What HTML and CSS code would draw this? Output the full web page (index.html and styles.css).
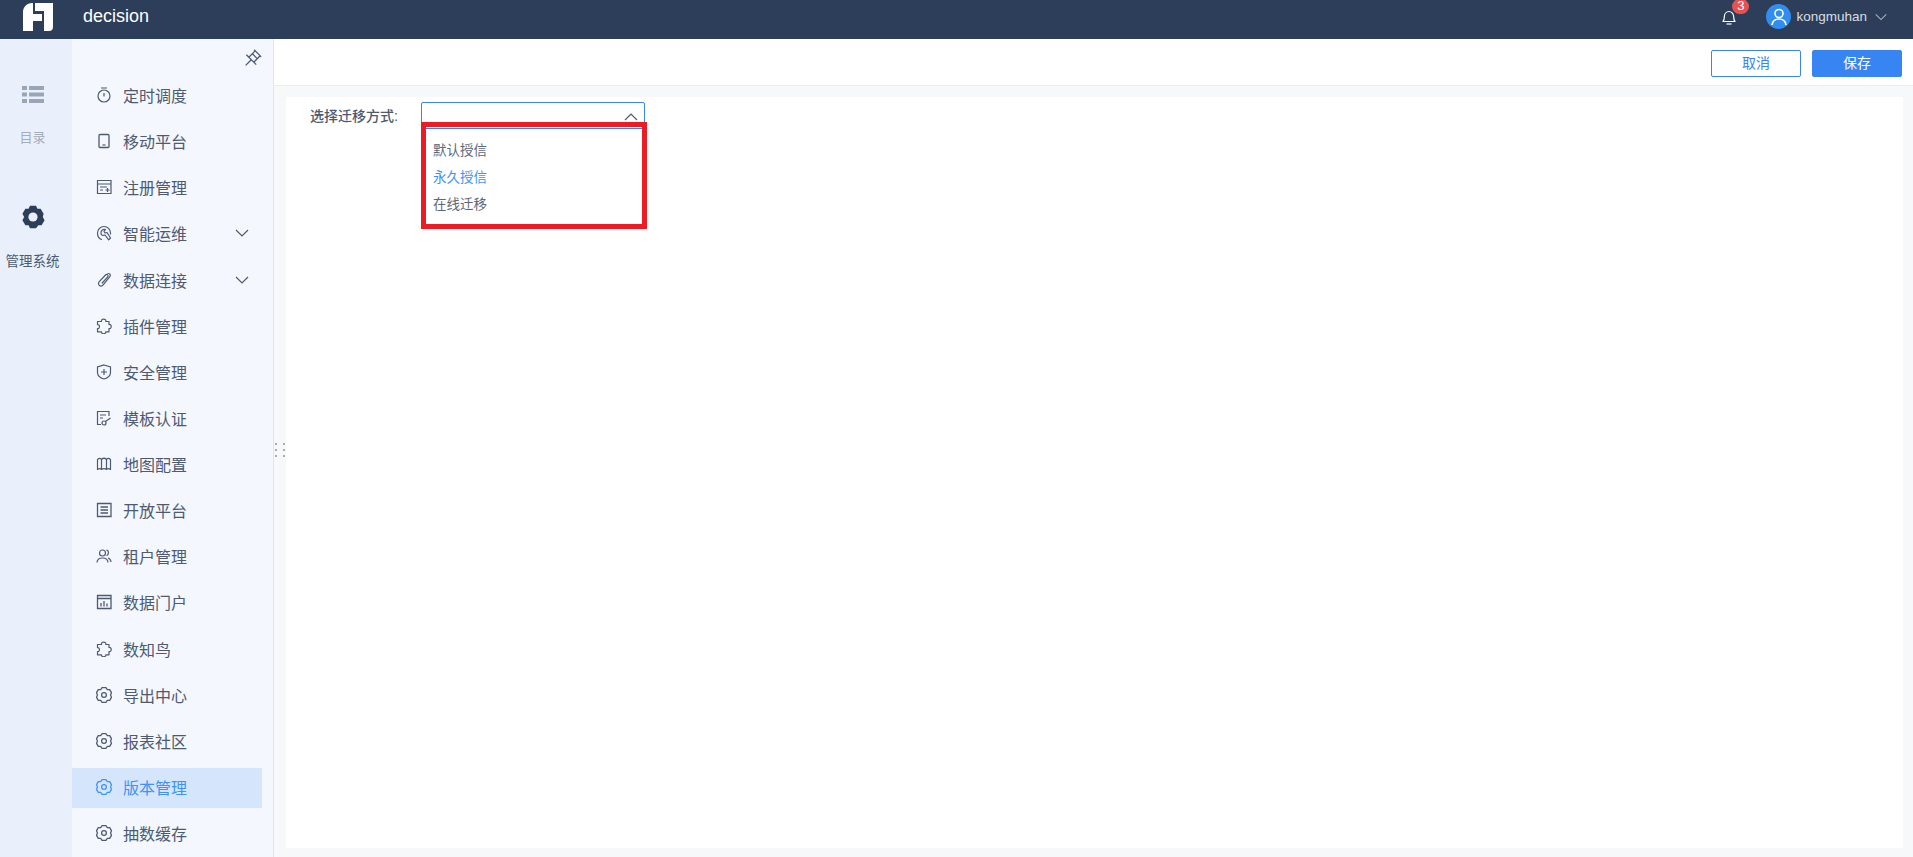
FILE: index.html
```html
<!DOCTYPE html>
<html lang="zh-CN">
<head>
    <meta charset="UTF-8">
    <title>decision</title>
    <link rel="stylesheet" href="styles.css">
</head>
<body>

<svg class="sprite" width="0" height="0">
    <symbol id="i-gear" viewBox="1 1 14 14">
        <path d="M6.300 1.600h3.400l1.200 1.600 2.100.1 1.600 2.800-.9 1.900.9 1.900-1.600 2.800-2.100.1-1.200 1.600H6.300l-1.200-1.600-2.100-.1-1.600-2.800.9-1.900-.9-1.900 1.600-2.800 2.100-.1z" fill="none" stroke="currentColor" stroke-width="1.100" stroke-linejoin="round"/>
        <circle cx="8" cy="8" r="2.100" fill="none" stroke="currentColor" stroke-width="1.100"/>
    </symbol>
    <symbol id="i-puzzle" viewBox="0 0 16 16">
        <path d="M5.500 3.500c-.6-3.300 5-3.300 4.300 0H13v3c3-.6 3 4.700 0 4v3.300H9.800c.5 2.600-4.800 2.600-4.300 0H1.500v-3.300c2.600.6 2.600-4.500 0-3.800V3.500z" fill="none" stroke="currentColor" stroke-width="1.200" stroke-linejoin="round"/>
    </symbol>
    <symbol id="i-chevron" viewBox="0 0 16 16">
        <path d="M2 5l6 6 6-6" fill="none" stroke="currentColor" stroke-width="1.200"/>
    </symbol>
</svg>

<header class="topbar">
    <svg class="logo" viewBox="0 0 30 28">
        <path d="M0 9C0 4 4 0 9 0h1v11h9v7h-9v10H0zM12 0h18v24a4 4 0 0 1-4 4h-5V8h-9z" fill="#fff"/>
    </svg>
    <span class="app-name">decision</span>
    <div class="topbar-right">
        <div class="bell">
            <svg viewBox="0 0 16 18" width="16" height="18">
                <path d="M2 13.500c1-1 1.300-2 1.300-4.500 0-3.200 2-5.500 4.700-5.500s4.700 2.300 4.700 5.500c0 2.500.3 3.500 1.300 4.500z" fill="none" stroke="#fff" stroke-width="1.200" stroke-linejoin="round"/>
                <path d="M5.500 16h5" stroke="#fff" stroke-width="1.200"/>
            </svg>
            <span class="badge">3</span>
        </div>
        <div class="avatar">
            <svg viewBox="0 0 24 24" width="24" height="24">
                <circle cx="12" cy="8.500" r="4" fill="none" stroke="#fff" stroke-width="1.600"/>
                <path d="M5 20c.5-4 3.300-6 7-6s6.500 2 7 6" fill="none" stroke="#fff" stroke-width="1.600"/>
            </svg>
        </div>
        <span class="user-name">kongmuhan</span>
        <svg class="user-arrow"><use href="#i-chevron"/></svg>
    </div>
</header>

<div class="main">
    <nav class="rail">
        <div class="rail-item rail-muted">
            <svg viewBox="0 0 22 18" width="22" height="18">
                <path d="M0 1h5v4H0zM7 1h15v4H7zM0 7.500h5v4H0zM7 7.500h15v4H7zM0 14h5v4H0zM7 14h15v4H7z" fill="#9aa5b8"/>
            </svg>
            <span>目录</span>
        </div>
        <div class="rail-item rail-active">
            <svg viewBox="0 0 24 24" width="24" height="24">
                <path d="M9 .8h6l1.400 3 3.200-.1 3 5.100L21.800 12l1.800 3.200-3 5.100-3.200-.1L15 23.200H9l-1.400-3-3.200.1-3-5.100L3.200 12 1.400 8.800l3-5.100 3.200.1z" fill="#2c3e5a"/>
                <circle cx="12" cy="12" r="4.600" fill="#e9f0fc"/>
            </svg>
            <span>管理系统</span>
        </div>
    </nav>

    <aside class="menu">
        <div class="pin-row">
            <svg viewBox="0 0 20 20" width="20" height="20">
                <g transform="rotate(45 10 10)" fill="none" stroke="#4d5a70" stroke-width="1.300">
                    <path d="M5 2h10M6.500 2v9M13.500 2v9M3 11h14M10 11v8M6.500 6h7"/>
                </g>
            </svg>
        </div>
        <ul class="menu-list">
            <li class="menu-item">
                <svg class="menu-icon" viewBox="0 0 16 16"><circle cx="8" cy="9" r="6" fill="none" stroke="currentColor" stroke-width="1.200"/><path d="M8 6v3.500M5 1h6" fill="none" stroke="currentColor" stroke-width="1.200"/></svg>
                <span>定时调度</span>
            </li>
            <li class="menu-item">
                <svg class="menu-icon" viewBox="0 0 16 16"><rect x="3" y="1.500" width="10" height="13" rx="1" fill="none" stroke="currentColor" stroke-width="1.300"/><path d="M6.500 12h3" stroke="currentColor" stroke-width="1.200"/></svg>
                <span>移动平台</span>
            </li>
            <li class="menu-item">
                <svg class="menu-icon" viewBox="0 0 16 16"><path d="M15 14.500H1.500v-13H15zM1.500 5H15M4 8h7M4 11h3M9.500 11h4M11.500 9v4" fill="none" stroke="currentColor" stroke-width="1.200"/></svg>
                <span>注册管理</span>
            </li>
            <li class="menu-item">
                <svg class="menu-icon" viewBox="0 0 16 16"><path d="M6 14.800C3 13.800 1.500 11 1.500 8a6.500 6.500 0 0 1 13 0v1.500M5 8.500a3.500 3.500 0 0 1 4.500-4L8 6.500l1 1.500 2-.5 3.500 5.500-1.800 1.800L9 10c-2 .8-4 .5-4-1.500z" fill="none" stroke="currentColor" stroke-width="1.200" stroke-linejoin="round"/></svg>
                <span>智能运维</span>
                <svg class="menu-arrow"><use href="#i-chevron"/></svg>
            </li>
            <li class="menu-item">
                <svg class="menu-icon" viewBox="0 0 16 16"><path d="M12 1.500c1.800-.2 3 1.500 2 3L7 13c-1.500 2-5 .8-4.500-1.800.1-.6.400-1.100.8-1.600L9.500 3c1.500-1.500 3.500.5 2 2.200L6.200 11" fill="none" stroke="currentColor" stroke-width="1.200" stroke-linecap="round"/></svg>
                <span>数据连接</span>
                <svg class="menu-arrow"><use href="#i-chevron"/></svg>
            </li>
            <li class="menu-item">
                <svg class="menu-icon"><use href="#i-puzzle"/></svg>
                <span>插件管理</span>
            </li>
            <li class="menu-item">
                <svg class="menu-icon" viewBox="0 0 16 16"><path d="M8 1l6.500 2v5.500c0 3-3 5.500-6.500 6.500C4.500 14 1.500 11.500 1.500 8.500V3zM8 5v6M5 8h6" fill="none" stroke="currentColor" stroke-width="1.200"/></svg>
                <span>安全管理</span>
            </li>
            <li class="menu-item">
                <svg class="menu-icon" viewBox="0 0 16 16"><path d="M5 14.500H1.500v-13H13V6M4 5h6M4 8h3" fill="none" stroke="currentColor" stroke-width="1.200"/><circle cx="8" cy="13" r="2" fill="none" stroke="currentColor" stroke-width="1.200"/><path d="M9.500 11.500L14.500 8" stroke="currentColor" stroke-width="1.200"/></svg>
                <span>模板认证</span>
            </li>
            <li class="menu-item">
                <svg class="menu-icon" viewBox="0 0 16 16"><path d="M1.500 3.500c1.500-1.500 3-1.500 4 0 1.500-1.500 3.500-1.500 5 0 1-1.500 2.500-1.500 4 0v10c-1.500-1-3-1-4 0-1.500-1-3.500-1-5 0-1-1-2.500-1-4 0zM5.500 3.500v10M10.500 3.500v10" fill="none" stroke="currentColor" stroke-width="1.200" stroke-linejoin="round"/></svg>
                <span>地图配置</span>
            </li>
            <li class="menu-item">
                <svg class="menu-icon" viewBox="0 0 16 16"><path d="M1.500 1.500H15v13H1.500zM4.500 5h7.500M4.500 8h7.500M4.500 11h7.500" fill="none" stroke="currentColor" stroke-width="1.300"/></svg>
                <span>开放平台</span>
            </li>
            <li class="menu-item">
                <svg class="menu-icon" viewBox="0 0 16 16"><circle cx="6.500" cy="5" r="3" fill="none" stroke="currentColor" stroke-width="1.200"/><path d="M1 14.500c.2-3 2.500-4.500 5.500-4.500s5.300 1.500 5.500 4.500M10.500 2.200c2.500.3 2.700 4.800 0 5.500M12 10c2 .5 2.800 2.200 3 4" fill="none" stroke="currentColor" stroke-width="1.200"/></svg>
                <span>租户管理</span>
            </li>
            <li class="menu-item">
                <svg class="menu-icon" viewBox="0 0 16 16"><path d="M1.500 1.500H15v13H1.500zM1.500 4.500H15" fill="none" stroke="currentColor" stroke-width="1.300"/><path d="M5 12.500V9M8 12.500V7M11 12.500V9.500" stroke="currentColor" stroke-width="1.300"/></svg>
                <span>数据门户</span>
            </li>
            <li class="menu-item">
                <svg class="menu-icon"><use href="#i-puzzle"/></svg>
                <span>数知鸟</span>
            </li>
            <li class="menu-item">
                <svg class="menu-icon"><use href="#i-gear"/></svg>
                <span>导出中心</span>
            </li>
            <li class="menu-item">
                <svg class="menu-icon"><use href="#i-gear"/></svg>
                <span>报表社区</span>
            </li>
            <li class="menu-item active">
                <svg class="menu-icon"><use href="#i-gear"/></svg>
                <span>版本管理</span>
            </li>
            <li class="menu-item">
                <svg class="menu-icon"><use href="#i-gear"/></svg>
                <span>抽数缓存</span>
            </li>
        </ul>
    </aside>

    <section class="content">
        <div class="toolbar">
            <button class="btn btn-plain">取消</button>
            <button class="btn btn-primary">保存</button>
        </div>
        <div class="resize-dots"><i></i><i></i><i></i><i></i><i></i><i></i></div>
        <div class="panel">
            <div class="form-row">
                <label class="form-label">选择迁移方式:</label>
                <div class="select">
                    <div class="select-box">
                        <svg class="select-arrow" viewBox="0 0 16 16"><path d="M2 11l6-6 6 6" fill="none" stroke="currentColor" stroke-width="1.200"/></svg>
                    </div>
                    <ul class="select-list">
                        <li>默认授信</li>
                        <li class="selected">永久授信</li>
                        <li>在线迁移</li>
                    </ul>
                    <div class="highlight"></div>
                </div>
            </div>
        </div>
    </section>
</div>

</body>
</html>
```

FILE: styles.css
```css
* {
    box-sizing: border-box;
}
body {
    font-family: "Liberation Sans", "Noto Sans CJK SC", sans-serif;
    margin: 0;
    height: 100vh;
    display: flex;
    flex-direction: column;
    overflow: hidden;
    background-color: #f7f8fa;
    color: #4d5a70;
}
ul {
    list-style: none;
    margin: 0;
    padding: 0;
}
.sprite {
    position: absolute;
}
.topbar {
    height: 39px;
    flex: none;
    display: flex;
    align-items: center;
    background-color: #2c3e5a;
    color: #fff;
    padding: 0 0 6px 23px;
}
.logo {
    width: 30px;
    height: 28px;
    margin-top: 1px;
}
.app-name {
    font-size: 18px;
    margin-left: 30px;
}
.topbar-right {
    margin-left: auto;
    display: flex;
    align-items: center;
    padding-right: 25px;
}
.bell {
    position: relative;
    width: 16px;
    height: 18px;
    margin-right: 29px;
}
.badge {
    position: absolute;
    left: 11px;
    top: -9px;
    width: 17px;
    height: 15px;
    border-radius: 8px;
    background-color: #e65251;
    font-size: 13px;
    line-height: 14px;
    text-align: center;
}
.avatar {
    width: 25px;
    height: 25px;
    border-radius: 50%;
    background-color: #2f8ef0;
    display: flex;
    align-items: center;
    justify-content: center;
}
.user-name {
    font-size: 13.5px;
    margin-left: 5px;
    color: #d9dee6;
}
.user-arrow {
    width: 14px;
    height: 14px;
    margin-left: 7px;
    color: #a9b2c0;
}
.main {
    flex: 1;
    display: flex;
    min-height: 0;
}
.rail {
    width: 72px;
    flex: none;
    background-color: #e9f0fc;
    padding: 46px 7px 0 0;
    display: flex;
    flex-direction: column;
    gap: 59px;
}
.rail-item {
    display: flex;
    flex-direction: column;
    align-items: center;
    gap: 24px;
    font-size: 13px;
}
.rail-muted {
    color: #a4adbb;
}
.rail-active {
    color: #4d5a70;
    font-size: 13.5px;
    gap: 21px;
}
.menu {
    width: 202px;
    flex: none;
    background-color: #f4f7fe;
    border-right: 1px solid #e2e5ec;
}
.pin-row {
    display: flex;
    justify-content: flex-end;
    padding: 10px 11px 0 0;
    height: 37px;
}
.menu-list {
    padding-right: 11px;
}
.menu-item {
    height: 40px;
    margin-bottom: 6.13px;
    display: flex;
    align-items: center;
    padding: 0 0 2px 24px;
    font-size: 16px;
}
.menu-icon {
    width: 16px;
    height: 16px;
    margin-right: 11px;
    flex: none;
}
.menu-arrow {
    width: 16px;
    height: 16px;
    margin-left: auto;
    margin-right: 12px;
}
.menu-item.active {
    background-color: #d5e5fb;
    color: #3d94f5;
}
.content {
    flex: 1;
    position: relative;
    display: flex;
    flex-direction: column;
    min-width: 0;
}
.toolbar {
    height: 47px;
    flex: none;
    background-color: #fff;
    border-bottom: 1px solid #e9ecf1;
    display: flex;
    justify-content: flex-end;
    align-items: flex-start;
    gap: 11px;
    padding: 11px 11px 0 0;
}
.btn {
    width: 90px;
    height: 27px;
    border-radius: 2px;
    font-family: inherit;
    font-size: 14px;
    padding: 0 0 3px;
    border: 1px solid #3685f2;
}
.btn-plain {
    background-color: #fff;
    color: #3685f2;
}
.btn-primary {
    background-color: #3685f2;
    color: #fff;
}
.resize-dots {
    position: absolute;
    left: 1px;
    top: 404px;
    display: grid;
    grid-template-columns: 2px 2px;
    column-gap: 6px;
    row-gap: 4px;
}
.resize-dots i {
    width: 2px;
    height: 2px;
    border-radius: 50%;
    background-color: #8a93a3;
}
.panel {
    flex: 1;
    background-color: #fff;
    margin: 11px 10px 9px 12px;
    padding: 5px 0 0 24px;
}
.form-row {
    display: flex;
}
.form-label {
    width: 111px;
    font-size: 14px;
    font-weight: 500;
    line-height: 28px;
}
.select {
    position: relative;
    width: 224px;
}
.select-box {
    height: 27px;
    border: 1px solid #3685f2;
    border-radius: 2px 2px 0 0;
    position: relative;
}
.select-arrow {
    position: absolute;
    right: 5px;
    top: 6px;
    width: 16px;
    height: 16px;
    color: #4d5a70;
}
.select-list {
    padding: 8px 0 10px 12px;
    font-size: 13.5px;
    color: #5d6778;
    border-bottom: 1px solid #dfe3ea;
}
.select-list li {
    height: 27px;
    line-height: 27px;
}
.select-list .selected {
    color: #3d94f5;
}
.highlight {
    position: absolute;
    left: 0;
    top: 20px;
    width: 226px;
    height: 107px;
    border: 5px solid #ed1c24;
}
```
